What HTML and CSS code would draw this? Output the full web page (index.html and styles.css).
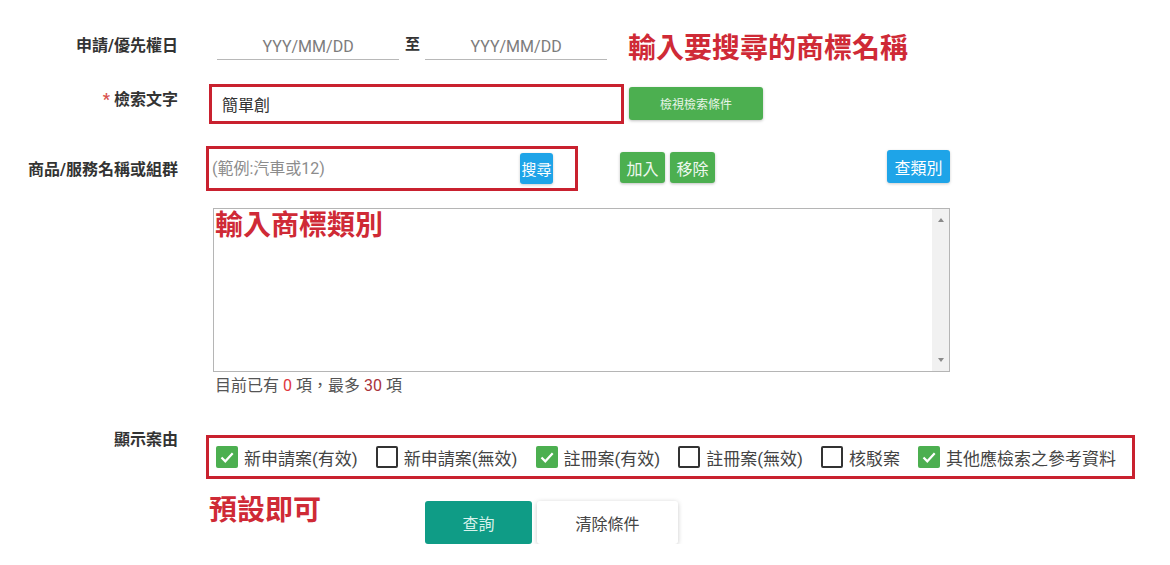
FILE: index.html
```html
<!DOCTYPE html>
<html lang="zh-Hant">
<head>
    <meta charset="UTF-8">
    <title>商標檢索</title>
    <link rel="stylesheet" href="styles.css">
</head>
<body>
    <form class="search-form">
        <!-- 日期區間 -->
        <div class="row row-date">
            <label class="label">申請/優先權日</label>
            <div class="field">
                <input class="date" type="text" placeholder="YYY/MM/DD">
                <span class="to">至</span>
                <input class="date" type="text" placeholder="YYY/MM/DD">
                <span class="note note-top">輸入要搜尋的商標名稱</span>
            </div>
        </div>

        <!-- 檢索文字 -->
        <div class="row row-keyword">
            <label class="label"><span class="req">*</span> 檢索文字</label>
            <div class="field">
                <div class="mark mark-keyword">
                    <input class="text-input" type="text" value="簡單創">
                </div>
                <button type="button" class="btn btn-green btn-view">檢視檢索條件</button>
            </div>
        </div>

        <!-- 商品/服務 -->
        <div class="row row-goods">
            <label class="label">商品/服務名稱或組群</label>
            <div class="field field-goods">
                <div class="mark mark-goods">
                    <input class="text-input" type="text" placeholder="(範例:汽車或12)">
                    <button type="button" class="btn btn-blue btn-small">搜尋</button>
                </div>
                <button type="button" class="btn btn-green btn-add">加入</button>
                <button type="button" class="btn btn-green btn-add">移除</button>
                <button type="button" class="btn btn-blue btn-class">查類別</button>
            </div>
        </div>

        <div class="row">
            <span class="label"></span>
            <div class="field field-list">
                <div class="list-box">
                    <div class="list-body">
                        <span class="note">輸入商標類別</span>
                    </div>
                    <div class="scrollbar">
                        <span class="arrow up"></span>
                        <span class="arrow down"></span>
                    </div>
                </div>
                <div class="counter">目前已有 <b class="num-zero">0</b> 項，最多 <b class="num-max">30</b> 項</div>
            </div>
        </div>

        <!-- 顯示案由 -->
        <div class="row row-status">
            <label class="label">顯示案由</label>
            <div class="field">
                <div class="mark mark-status">
                    <label class="check on"><span class="box"><svg viewBox="0 0 22 22"><path d="M5.5 11.5l3.8 3.8 7.4-8"/></svg></span>新申請案(有效)</label>
                    <label class="check"><span class="box"></span>新申請案(無效)</label>
                    <label class="check on"><span class="box"><svg viewBox="0 0 22 22"><path d="M5.5 11.5l3.8 3.8 7.4-8"/></svg></span>註冊案(有效)</label>
                    <label class="check"><span class="box"></span>註冊案(無效)</label>
                    <label class="check"><span class="box"></span>核駁案</label>
                    <label class="check on"><span class="box"><svg viewBox="0 0 22 22"><path d="M5.5 11.5l3.8 3.8 7.4-8"/></svg></span>其他應檢索之參考資料</label>
                </div>
            </div>
        </div>

        <div class="row row-actions">
            <span class="label"></span>
            <div class="field">
                <span class="note note-default">預設即可</span>
                <button type="button" class="btn btn-query">查詢</button>
                <button type="button" class="btn btn-clear">清除條件</button>
            </div>
        </div>
    </form>
</body>
</html>
```

FILE: styles.css
```css
/* General */
body {
    margin: 0;
    padding: 33px 0 0;
    background: #fff;
    color: #444;
    font-family: Roboto, "Noto Sans CJK TC", sans-serif;
}

.search-form {
    width: 1170px;
}

.row {
    display: flex;
    align-items: flex-start;
}

.label {
    width: 178px;
    flex-shrink: 0;
    margin-right: 28px;
    text-align: right;
    font-size: 16px;
    line-height: 22px;
    font-weight: 700;
    color: #333;
}

.req {
    color: #d9534f;
}

.field {
    display: flex;
    align-items: flex-start;
}

/* Red highlight boxes */
.mark {
    border: 3px solid #c9212f;
    box-sizing: border-box;
    background: #fff;
}

.note {
    font-size: 28px;
    line-height: 32px;
    font-weight: 700;
    color: #cf2a36;
    white-space: nowrap;
}

/* Date row */
.row-date .label {
    padding-top: 2px;
}

.row-date .field {
    height: 28px;
}

.date {
    width: 182px;
    height: 27px;
    box-sizing: border-box;
    border: 0;
    border-bottom: 1px solid #b8b8b8;
    padding: 0;
    text-align: center;
    font-family: Roboto, sans-serif;
    font-size: 16px;
    outline: none;
}

.date:first-child {
    margin-left: 11px;
}

.date::placeholder {
    color: #7c7c7c;
}

.to {
    margin: 0 5px 0 6px;
    font-size: 15px;
    line-height: 22px;
    font-weight: 700;
    color: #333;
}

.note-top {
    margin: 0 0 0 21px;
}

/* Keyword row */
.row-keyword {
    margin-top: 23px;
}

.row-keyword .label {
    padding-top: 5px;
}

.mark-keyword {
    width: 415px;
    height: 40px;
    margin-left: 3px;
}

.text-input {
    width: 100%;
    height: 100%;
    box-sizing: border-box;
    border: 0;
    padding: 0 0 0 10px;
    font-family: Roboto, "Noto Sans CJK TC", sans-serif;
    font-size: 16px;
    color: #333;
    background: transparent;
    outline: none;
}

.text-input::placeholder {
    color: #8c8c8c;
}

/* Buttons */
.btn {
    border: 0;
    border-radius: 3px;
    padding: 0;
    font-family: Roboto, "Noto Sans CJK TC", sans-serif;
    color: #fff;
    cursor: pointer;
}

.btn-green {
    background: #4caf50;
    box-shadow: 0 1px 3px rgba(0, 0, 0, 0.25);
}

.btn-blue {
    background: #1ea4e8;
    box-shadow: 0 1px 3px rgba(0, 0, 0, 0.2);
}

.btn-view {
    width: 134px;
    height: 33px;
    margin: 3px 0 0 5px;
    font-size: 12px;
    color: #e8f5e8;
}

/* Goods row */
.row-goods {
    margin-top: 22px;
}

.row-goods .label {
    padding-top: 13px;
}

.field-goods {
    width: 744px;
}

.mark-goods {
    display: flex;
    align-items: center;
    width: 372px;
    height: 45px;
    padding: 0 22px 0 0;
}

.mark-goods .text-input {
    padding-left: 3px;
}

.btn-small {
    flex-shrink: 0;
    width: 33px;
    height: 31px;
    margin-top: -1px;
    font-size: 15px;
}

.btn-add {
    width: 45px;
    height: 31px;
    margin: 6px 0 0 5px;
    font-size: 16px;
    color: #eef8ee;
}

.mark-goods + .btn-add {
    margin-left: 42px;
}

.btn-class {
    width: 63px;
    height: 33px;
    margin: 4px 0 0 auto;
    font-size: 16px;
}

/* List box */
.field-list {
    flex-direction: column;
    margin: 17px 0 0 7px;
}

.list-box {
    display: flex;
    width: 737px;
    height: 164px;
    box-sizing: border-box;
    border: 1px solid #b5b5b5;
}

.list-body {
    flex: 1;
    padding: 1px 0 0 1px;
}

.scrollbar {
    width: 17px;
    display: flex;
    flex-direction: column;
    justify-content: space-between;
    align-items: center;
    padding: 9px 0 9px;
    background: #f1f1f1;
}

.arrow {
    width: 0;
    height: 0;
    border-left: 3px solid transparent;
    border-right: 3px solid transparent;
}

.arrow.up {
    border-bottom: 4px solid #8a8a8a;
}

.arrow.down {
    border-top: 4px solid #8a8a8a;
}

.counter {
    margin: 2px 0 0 2px;
    font-size: 16px;
    line-height: 24px;
    color: #555;
}

.counter b {
    font-weight: 400;
}

.num-zero {
    color: #e0363c;
}

.num-max {
    color: #a8323a;
}

/* Status row */
.row-status {
    margin-top: 31px;
}

.mark-status {
    display: flex;
    align-items: center;
    width: 929px;
    height: 44px;
    margin-top: 6px;
    padding-left: 7px;
}

.check {
    display: flex;
    align-items: center;
    margin-right: 18px;
    font-size: 17px;
    color: #444;
    white-space: nowrap;
}

.box {
    width: 22px;
    height: 22px;
    box-sizing: border-box;
    border: 2px solid #333;
    border-radius: 2px;
    margin-right: 6px;
}

.check.on .box {
    border: 0;
    background: #4caf50;
}

.box svg {
    display: block;
    width: 22px;
    height: 22px;
    fill: none;
    stroke: #fff;
    stroke-width: 2.2;
}

/* Actions */
.row-actions {
    margin-top: 16px;
}

.note-default {
    width: 216px;
    margin-left: 3px;
}

.btn-query {
    width: 107px;
    height: 43px;
    margin-top: 6px;
    background: #0f9c86;
    font-size: 16px;
    color: #d8f2ec;
}

.btn-clear {
    width: 141px;
    height: 43px;
    margin: 6px 0 0 5px;
    background: #fff;
    color: #444;
    font-size: 16px;
    box-shadow: 0 1px 5px rgba(0, 0, 0, 0.22);
}
```
